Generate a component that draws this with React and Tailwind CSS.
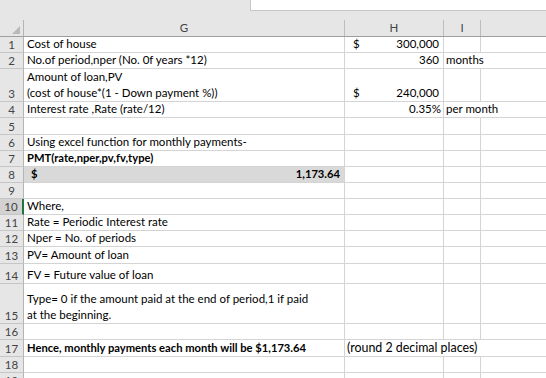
import React from "react";

const rows = [
  { n: 1, h: 16, g: "Cost of house", dollar: true, hv: "300,000" },
  { n: 2, h: 16, g: "No.of period,nper (No. 0f years *12)", hv: "360", i: "months" },
  { n: 3, h: 33, g: ["Amount of loan,PV", "(cost of house*(1 - Down payment %))"], dollar: true, hv: "240,000" },
  { n: 4, h: 16, g: "Interest rate ,Rate (rate/12)", hv: "0.35%", pct: true, i: "per month" },
  { n: 5, h: 17 },
  { n: 6, h: 16, g: "Using excel function for monthly payments-" },
  { n: 7, h: 16, g: "PMT(rate,nper,pv,fv,type)", bold: true },
  { n: 8, h: 16, special: true },
  { n: 9, h: 16 },
  { n: 10, h: 16, g: "Where,", sel: true },
  { n: 11, h: 16, g: "Rate = Periodic Interest rate" },
  { n: 12, h: 16, g: "Nper = No. of periods" },
  { n: 13, h: 17, g: "PV= Amount of loan" },
  { n: 14, h: 20, g: "FV = Future value of loan" },
  { n: 15, h: 40, g: ["Type= 0 if the amount paid at the end of period,1 if paid", "at the beginning."] },
  { n: 16, h: 16 },
  { n: 17, h: 17, g: "Hence, monthly payments each month will be $1,173.64", bold: true, hover: "(round 2 decimal places)" },
  { n: 18, h: 16 },
  { n: 19, h: 16 },
];

function Row({ r }) {
  const lines = Array.isArray(r.g) ? r.g : r.g ? [r.g] : [];
  return (
    <div className="flex" style={{ height: r.h }}>
      <div
        className={`w-[24px] shrink-0 flex items-end justify-center border-b border-r text-[11.5px] leading-[15px] text-[#444] ${
          r.sel ? "bg-[#d2d2d2] border-r-[#217346] border-r-2 border-b-[#c6c6c6]" : "bg-[#e6e6e6] border-[#c6c6c6] border-r-[#b5b5b5]"
        }`}
      >
        {r.n}
      </div>
      <div
        className={`w-[321px] shrink-0 border-b border-r border-[#d4d4d4] flex flex-col justify-end pl-[3px] pr-[4px] leading-[16px] text-black whitespace-nowrap ${
          r.bold ? "font-bold text-[11.2px]" : "text-[11.5px]"
        } ${r.special ? "bg-[#d9d9d9]" : ""}`}
      >
        {r.special ? (
          <div className="flex justify-between font-bold text-[11.2px]">
            <span className="pl-[4px]">$</span>
            <span>1,173.64</span>
          </div>
        ) : (
          lines.map((l, k) => <div key={k}>{l}</div>)
        )}
      </div>
      <div
        className={`w-[99px] shrink-0 border-b border-[#d4d4d4] flex items-end text-[11.5px] leading-[16px] text-black whitespace-nowrap ${
          r.hover ? "border-r-0 w-[100px]" : "border-r"
        } ${r.pct ? "pr-[2px]" : "pr-[4px]"}`}
      >
        {r.hover ? (
          <span className="pl-[2px] text-[12.4px] overflow-visible">{r.hover}</span>
        ) : r.hv ? (
          <div className="flex w-full justify-between">
            <span className="pl-[8px]">{r.dollar ? "$" : ""}</span>
            <span>{r.hv}</span>
          </div>
        ) : null}
      </div>
      <div
        className={`shrink-0 border-b border-[#d4d4d4] flex items-end text-[11.5px] leading-[16px] text-black whitespace-nowrap ${
          r.i || r.hover ? "border-r-0 w-[37px]" : "border-r w-[37px]"
        }`}
      >
        {r.i ? <span className="pl-[2px]">{r.i}</span> : null}
      </div>
      <div className="flex-1 border-b border-[#d4d4d4]"></div>
    </div>
  );
}

export default function App() {
  return (
    <div className="w-[546px] h-[378px] overflow-hidden bg-white font-[family-name:Lato,sans-serif]">
      <div className="h-[37px] bg-[#e6e6e6] border-b border-[#9e9e9e] flex flex-col">
        <div className="h-[20px] flex">
          <div className="w-[250px]"></div>
          <div className="flex-1 h-[11px] bg-white border-l border-b border-[#c6c6c6]"></div>
        </div>
        <div className="flex flex-1 text-[11.5px] leading-[16px] text-[#444]">
          <div className="w-[24px] shrink-0 border-r border-[#b5b5b5] flex items-end justify-end pr-[3px] pb-[2px]">
            <svg width="8" height="8" viewBox="0 0 8 8">
              <polygon points="0,8 8,8 8,0" fill="#b9b9b9" />
            </svg>
          </div>
          <div className="w-[321px] shrink-0 border-r border-[#bdbdbd] flex items-end justify-center">G</div>
          <div className="w-[99px] shrink-0 border-r border-[#bdbdbd] flex items-end justify-center">H</div>
          <div className="w-[37px] shrink-0 border-r border-[#bdbdbd] flex items-end justify-center">I</div>
          <div className="flex-1"></div>
        </div>
      </div>
      {rows.map((r) => (
        <Row key={r.n} r={r} />
      ))}
    </div>
  );
}
